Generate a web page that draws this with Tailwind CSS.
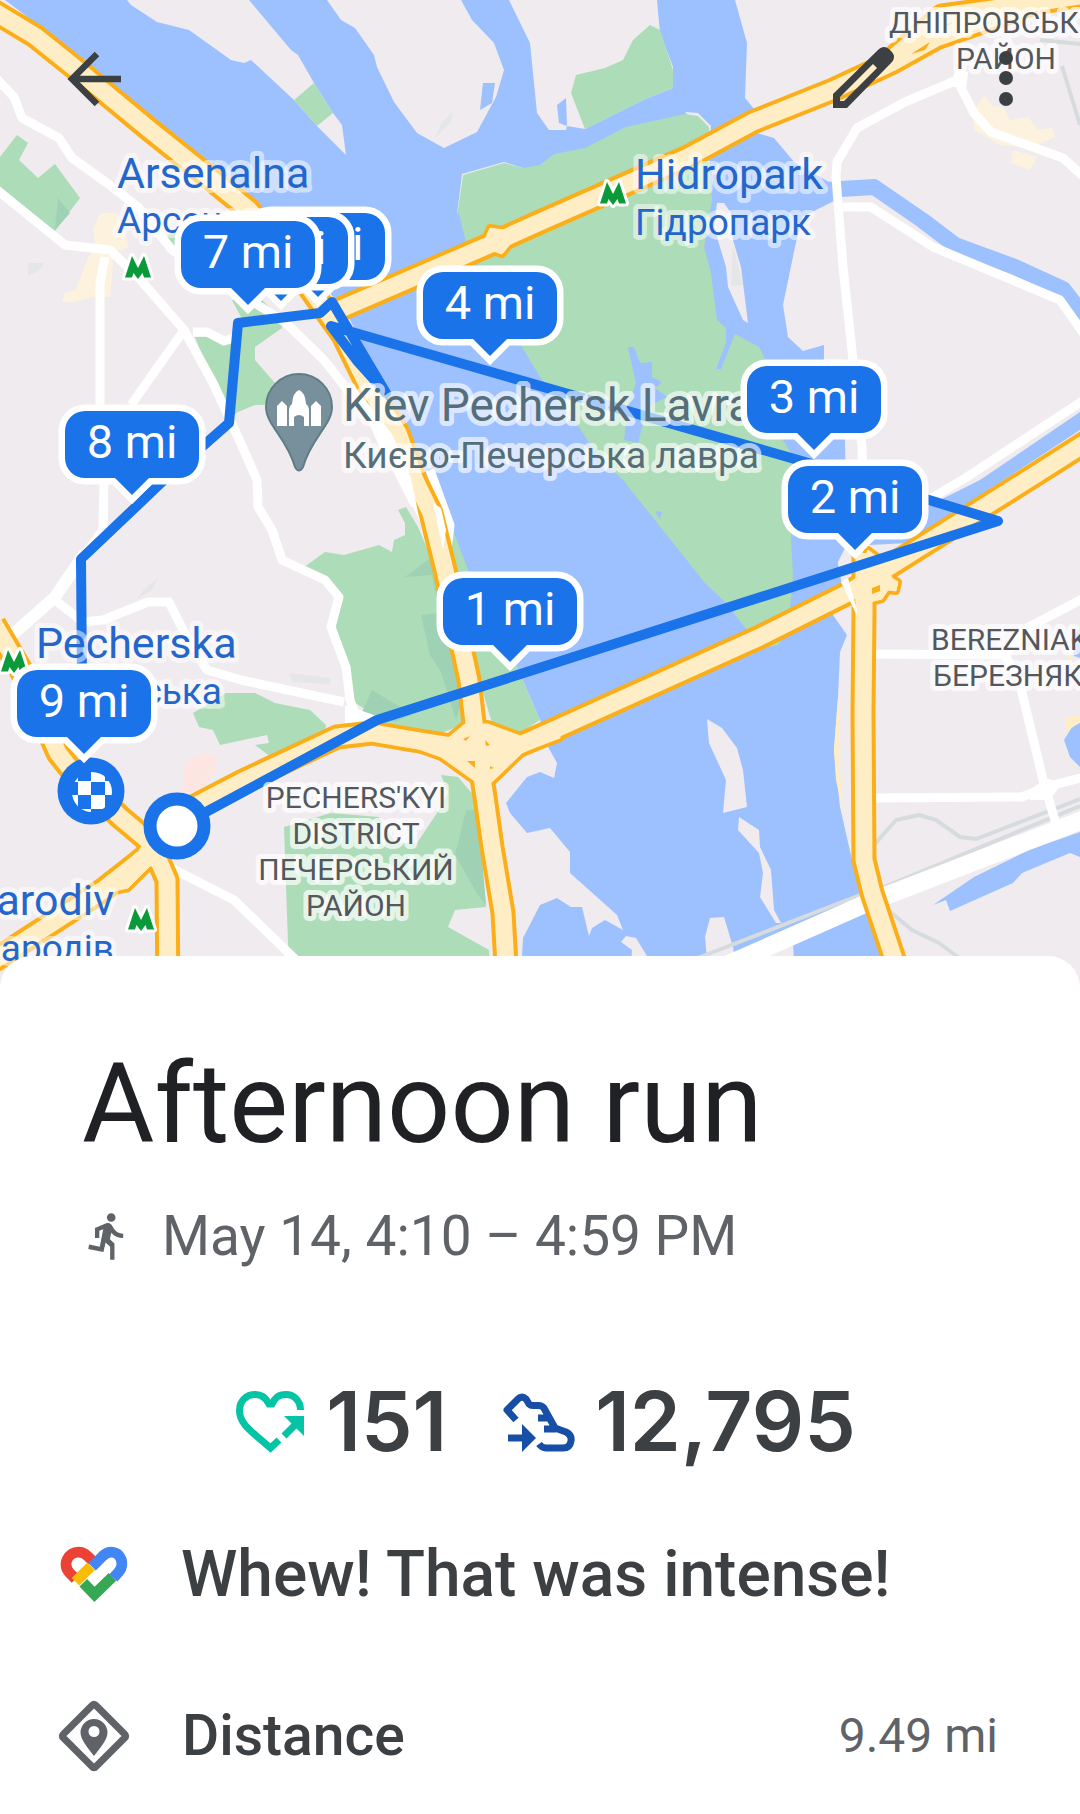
<!DOCTYPE html>
<html lang="en">
<head>
<meta charset="utf-8">
<meta name="viewport" content="width=device-width, initial-scale=1">
<title>Afternoon run</title>
<script src="https://cdn.jsdelivr.net/npm/@tailwindcss/browser@4"></script>
</head>
<body class="bg-white font-['Roboto',sans-serif] text-[#3c4043] overflow-x-hidden">
<header class="relative">
<svg class="block w-full h-auto" viewBox="0 0 1080 996" role="img" aria-label="Map of the run">
<defs>
<g id="bubble">
<path d="M20 0H114A20 20 0 0 1 134 20V47A20 20 0 0 1 114 67H84L67 84L50 67H20A20 20 0 0 1 0 47V20A20 20 0 0 1 20 0Z" fill="#1a73e8" stroke="#fff" stroke-width="13" paint-order="stroke"/>
</g>
<path id="metro" d="M-13 10.500L-6 -11L0 1L6 -11L13 10.500H6L4.500 6L0 12L-4.500 6L-6 10.500Z" fill="#0b9a3a" stroke="#fff" stroke-width="6" paint-order="stroke" stroke-linejoin="round"/>
<g id="highways" fill="none" stroke-linejoin="round">
<path d="M-10 9L35 36L80 72L150 130L200 170L248 209L290 260L318 300L343 335L370 390L398 433L415 480L431 513L445 570L469 680L476 740L485 797L492 847L503 913L508 1000"/>
<path d="M336 311L489 245L540 222L688 157L753 122L833 90L891 63L936 38L988 20L1080 -14"/>
<path d="M884 66L942 16L1000 8L1080 -4"/>
<path d="M-10 963L103 890L145 857L160 830L193 807L241 782L337 737L372 733L413 740L476 750L520 745L547 733L760 637L850 592L884 570L1027 480L1090 440"/>
<path d="M-6 624L21 670L58 753L69 767L120 817L151 843L167 880L168 1000"/>
<path d="M864 553L864 613L863 713L864 860L872 893L893 956L907 1000"/>
</g>
<path id="junctions" d="M389 728L413 738L448 738L465 724L488 724L523 737L560 722V738L523 752L492 782H476L441 757L396 741ZM485 240L490 228L510 231L511 243L502 254L490 250ZM104 885L107 876L118 872L136 853L150 848L166 865L150 866L128 888L110 892ZM868 550L884 562L892 578L898 582L896 591L888 590L882 599L870 602H856V590L858 575Z"/>
</defs>
<rect width="1080" height="996" fill="#f0ebef"/>
<!-- river -->
<path fill="#9dc1ff" d="M5 0H735L747 43L745 98L755 110L757 133L774 138L795 163L829 182L836 200L802 217L795 247L783 305L788 337L803 351L824 345V370L845 440L846 490L930 505L980 480L1080 412V430L908 543L870 545L845 550L838 562L842 585L833 615L847 635L840 652L838 697L834 750L840 807L855 873L863 900L907 1000H522V956L523 938L540 905L557 898L571 907H582L589 936L592 928L605 920L623 930L617 915L570 873V852L550 828L527 833L510 813L506 803L527 777L540 772L554 778L557 763L547 745L540 720L517 667L475 600L448 517L430 490L390 400L345 310L260 215L200 165L100 85L42 28Z"/>
<path fill="none" stroke="#9dc1ff" stroke-width="16" stroke-linejoin="round" d="M825 190L874 187L922 220L955 245L1015 267L1063 289L1084 316"/>
<path fill="#9dc1ff" d="M933 905L974 877L1029 850L1080 832V857L1070 853L1022 873L1013 883L950 911L946 900ZM1080 723L1072 727L1064 740L1070 757L1080 767ZM1080 628L1070 640L1074 656L1080 658Z"/>
<!-- islands -->
<g fill="#f0ebef">
<path d="M127 0L131 5L157 22L189 30L231 60L244 63L251 60L294 100L317 126L346 155L342 125L333 113L314 83L298 55L291 50L249 0Z"/>
<path d="M327 0L341 20L355 28L374 55L377 67L394 102L417 133L444 148L477 132L496 97L504 70L494 43L472 20L461 0Z"/>
<path d="M509 0L530 43L537 113L549 130H566L567 126L585 129L643 100L673 88V67L660 33L657 0Z"/>
<path d="M707 719L722 728L737 748L743 770L747 807L723 813L726 780L709 743ZM739 817L759 830L760 847L771 870L774 910L781 923H776L760 897L763 873L759 853L738 830ZM710 918L724 917L733 947L735 960H707L705 937ZM626 936L636 938L647 956V965H631L632 950L621 942ZM760 960L793 944L794 960Z"/>
<path d="M462 174L504 162L523 168L463 190L457 215ZM685 112L698 113L711 126L710 138Z"/>
<path d="M838 562L845 548L866 550V600L842 585Z"/>
</g>
<path fill="#9dc1ff" d="M483 83H495L492 103L480 110ZM566 98L557 105L559 123L567 126Z"/>
<path fill="#ffeec5" d="M838 697L840 720V770L843 812L836 780L834 750ZM1066 655L1072 650V662ZM1065 718L1080 715V722L1066 732Z"/>
<!-- parks -->
<g fill="#addcb8">
<path d="M585 129L571 93L576 75L605 68L623 60L633 40L650 25L660 30L673 70V88L643 100Z"/>
<path d="M294 100L314 83L333 113L317 126Z"/>
<path d="M463 175L504 163L523 168L540 165L554 154L585 148L626 127L685 114L698 116L709 127L710 137V170L712 200L704 247L711 273L717 320L726 328V343L716 369H721L735 334L759 347L768 365L781 437L795 460L791 537L793 577L788 630L778 645L764 648L747 630L726 603L705 583L623 480L600 460L581 430L540 377L522 347L479 267L466 242L458 210Z"/>
<path d="M17 135L28 143L19 160L38 178L55 164L80 198L55 231L0 193V157Z"/>
<path d="M232 300H262L282 320V328L255 347V360L275 383L265 405H255L238 412L227 420L195 337H234L241 317ZM164 237L180 230V250Z"/>
<path d="M398 510L406 507L418 527L429 553L439 613L465 722L461 725L437 735L413 733L389 725L351 700L344 663L327 627L339 597L325 580L303 568L325 552L344 555L379 545L392 552L394 540L405 535V523Z"/>
<path d="M448 517L468 570L490 630L517 667L540 720L520 733L492 723L440 547Z"/>
<path d="M226 693H255L275 703L310 710L326 725L324 737L275 760L255 745L269 743L267 735L220 745L213 730L199 727L193 713Z"/>
<path d="M441 775L458 777L475 797L486 907L455 910L448 927L489 950L491 1000H290L288 943L284 827L331 813L379 817L396 843H417L437 813L448 793Z"/>
</g>
<path fill="#9fd2b5" d="M441 550L405 577L432 575L439 613L421 615L430 655L441 672L456 720L465 690L440 570ZM372 690L362 712L395 722L412 714ZM466 810L455 855L478 895L486 905L478 810ZM58 198L70 213L55 230Z"/>
<path fill="#9dc1ff" d="M628 347H634L640 363L652 362V377L662 382L655 388L667 397L647 407L638 443L624 440L628 407L636 383ZM655 511L662 512L660 519Z"/>
<path fill="#f0ebef" d="M717 203H724L731 213L733 240L741 267L748 323L743 320L728 287L726 267L714 227Z"/>
<path fill="#e4e6e7" d="M453 112L451 122L435 138L442 122ZM28 263L44 263L40 270L28 276ZM733 245L743 285L731 286ZM158 578L152 590L137 599L145 588ZM289 673L330 678V684L292 682Z"/>
<path fill="#fdf2dd" d="M93 230L100 213H117L129 247L114 253L110 297H93L74 302H62L65 293L76 290L88 258L96 248ZM972 113L984 95L992 106L1003 107L1010 120L1028 117L1038 130L1052 128L1055 137L1030 148L1000 145L975 130ZM1013 150L1037 157L1030 170L1011 163Z"/>
<path fill="#fde6e2" d="M185 763L205 752L217 757L216 772L205 782L203 792H182Z"/>
<!-- rail and minor roads -->
<g fill="none" stroke="#d6dbde" stroke-width="4" stroke-linejoin="round">
<path d="M690 961L860 895L884 887L1080 806M874 845L896 820L919 815L936 820L960 837L976 839L1080 799M888 910L912 930L939 943L962 960M1062 66L1080 125M1040 40L1080 44"/>
</g>
<g fill="none" stroke="#fff" stroke-width="9" stroke-linejoin="round">
<path d="M-4 78L14 97L22 118L59 138L72 158L107 183L138 207L172 250L286 323L324 360L375 425L415 505"/>
<path d="M-4 189L65 245L110 250L138 277L184 330L213 383L238 437L257 480L258 507L272 530L282 560L325 580L339 597L331 627L346 667L350 700L358 722"/>
<path d="M105 257L100 283V407L104 480L103 530L83 557"/>
<path stroke-width="12" d="M85 553L55 597L10 637"/>
<path d="M184 330L131 405M193 332H207L224 341L238 337M55 600L83 622L103 620L148 602H169L183 630L207 670L241 680L344 702M169 867L234 900L296 960"/>
<path d="M957 80L905 102L857 128L837 162L836 177L843 267L853 360L862 447L864 550M957 80L974 113L991 132L1063 158L1084 177M843 207H871L933 247L1060 300L1084 334"/>
<path d="M1084 400L967 477L925 502M872 654L1005 655L1019 680L1043 780L1057 827M871 798L1022 797L1046 787L1084 777M1005 655L1029 627L1084 598M430 470L450 525L447 550"/>
<path stroke-width="18" d="M680 985L747 956L867 903L1090 817"/>
</g>
<path fill="#fff" d="M345 705L377 716L370 735L345 738ZM1030 790L1046 778L1062 783L1050 800H1030ZM956 68L968 72L966 90L950 86Z"/>
<!-- highways: casing, then surface -->
<use href="#highways" stroke="#fbae17" stroke-width="25"/>
<use href="#junctions" fill="#fbae17" stroke="#fbae17" stroke-width="8" stroke-linejoin="round"/>
<use href="#highways" stroke="#ffeec5" stroke-width="17"/>
<use href="#junctions" fill="#ffeec5" stroke="#ffeec5" stroke-width="1"/>
<path fill="#fbae17" d="M463 739L470 736L466 741ZM485 740L490 745L486 746ZM467 761H475V768ZM872 588L880 585V591L872 594ZM911 54L930 42L925 50ZM490 766L494 768L490 769Z"/>
<path fill="#fff" d="M352 383L362 396L392 434L411 478L420 522L404 488L378 444ZM433 503L441 508L446 530L443 550ZM841 582L848 578L857 610V616Z"/>
<!-- route -->
<path fill="none" stroke="#1a73e8" stroke-width="10" stroke-linejoin="round" stroke-linecap="round" d="M178 827L377 720L998 521L929 500L812 464L331 326L358 362L386 393L332 302L320 313L238 323L229 423L162 482L81 559L82 680"/>
<path fill="#1a73e8" d="M350 350L364 352L391 405L383 396Z"/>
<!-- place names -->
<g paint-order="stroke" stroke="#fff" stroke-opacity=".5" stroke-width="10" stroke-linejoin="round">
<g fill="#2467cc" font-size="43">
<text x="117" y="188">Arsenalna</text>
<text x="635" y="189">Hidropark</text>
<text x="36" y="658">Pecherska</text>
<text x="114" y="915" text-anchor="end">arodiv</text>
<g font-size="37">
<text x="117" y="233">Арсенальна</text>
<text x="635" y="235">Гідропарк</text>
<text x="222" y="704" text-anchor="end">Печерська</text>
<text x="114" y="961" text-anchor="end">ародів</text>
</g>
</g>
<g fill="#546e7a" stroke-opacity=".65">
<text x="343" y="421" font-size="46">Kiev Pechersk Lavra</text>
<text x="343" y="468" font-size="37">Києво-Печерська лавра</text>
</g>
<g fill="#54585d" font-size="30" stroke-opacity=".7">
<text x="356" y="808" text-anchor="middle">PECHERS'KYI</text>
<text x="356" y="844" text-anchor="middle">DISTRICT</text>
<text x="356" y="880" text-anchor="middle">ПЕЧЕРСЬКИЙ</text>
<text x="356" y="916" text-anchor="middle">РАЙОН</text>
<text x="931" y="650">BEREZNIAK</text>
<text x="933" y="686">БЕРЕЗНЯК</text>
<text x="889" y="33">ДНІПРОВСЬК</text>
<text x="956" y="69">РАЙОН</text>
</g>
</g>
<use href="#metro" x="138" y="267"/>
<use href="#metro" x="613" y="193"/>
<use href="#metro" x="14" y="661"/>
<use href="#metro" x="141" y="919"/>
<!-- landmark pin -->
<path d="M299 374A33 33 0 0 1 332 407C332 425 311 438 303 467Q299 474 295 467C287 438 266 425 266 407A33 33 0 0 1 299 374Z" fill="#78909c" stroke="#607d87" stroke-width="2"/>
<path fill="#fff" d="M277 426V406L282 401L287 406V426ZM289 426V411Q289 406 292 404Q293 392 299 390Q305 392 306 404Q309 406 309 411V426H304V417Q299 413 294 417V426ZM311 426V406L316 401L321 406V426Z"/>
<!-- start and finish -->
<circle cx="91" cy="791" r="33.500" fill="#1a73e8"/>
<clipPath id="flag"><circle cx="92" cy="792" r="20"/></clipPath>
<g clip-path="url(#flag)" fill="#fff"><path d="M72 772H78V782H72ZM91 771H105V782H91ZM78 781H91V795H78ZM105 781H113V795H105ZM91 795H105V809H91ZM70 795H78V809H70ZM78 809H91V813H78Z"/></g>
<circle cx="177" cy="826" r="27" fill="#fff" stroke="#1a73e8" stroke-width="13"/>
<!-- mile markers -->
<g fill="#fff" font-size="47" text-anchor="middle">
<use href="#bubble" x="251" y="213"/><text x="318" y="260">5 mi</text>
<use href="#bubble" x="214" y="217"/><text x="281" y="264">6 mi</text>
<use href="#bubble" x="181" y="221"/><text x="248" y="268">7 mi</text>
<use href="#bubble" x="423" y="272"/><text x="490" y="319">4 mi</text>
<use href="#bubble" x="747" y="366"/><text x="814" y="413">3 mi</text>
<use href="#bubble" x="788" y="466"/><text x="855" y="513">2 mi</text>
<use href="#bubble" x="443" y="578"/><text x="510" y="625">1 mi</text>
<use href="#bubble" x="65" y="411"/><text x="132" y="458">8 mi</text>
<use href="#bubble" x="17" y="670"/><text x="84" y="717">9 mi</text>
</g>
</svg>
<nav class="absolute inset-x-0 top-8 flex items-center px-12 text-[#3c4043]" aria-label="Activity actions">
<button type="button" aria-label="Back" class="size-24"><svg class="size-full" viewBox="0 0 96 96" fill="none" stroke="currentColor" stroke-width="6.500"><path d="M73 47H24M49 22L24 47L49 72"/></svg></button>
<button type="button" aria-label="Edit" class="ml-auto mr-11 size-24"><svg class="size-full" viewBox="0 0 96 96"><path fill="currentColor" fill-rule="evenodd" d="M17 76V62L63 17Q68 13 73 17L76 20Q80 25 76 30L31 76ZM24 69H28L61 36L57 32L24 65Z"/></svg></button>
<button type="button" aria-label="More options" class="-mr-5 size-24"><svg class="size-full" viewBox="0 0 96 96" fill="currentColor"><circle cx="50" cy="26" r="7"/><circle cx="50" cy="46" r="7"/><circle cx="50" cy="67" r="7"/></svg></button>
</nav>
</header>
<main class="relative -mt-10 rounded-t-[32px] bg-white pt-[88px] pb-2">
<section class="px-[82px]">
<h1 class="text-[111px] leading-[120px] text-[#202124]">Afternoon run</h1>
<p class="mt-10 flex items-center gap-7 text-[55px] leading-[64px] text-[#5f6368]">
<svg class="size-[52px] shrink-0" viewBox="0 0 24 24" fill="currentColor" aria-label="Run"><path d="M13.490 5.480c1.100 0 2-.9 2-2s-.9-2-2-2-2 .9-2 2 .9 2 2 2zm-3.600 13.900l1-4.400 2.100 2v6h2v-7.500l-2.100-2 .6-3c1.300 1.500 3.300 2.500 5.500 2.500v-2c-1.900 0-3.500-1-4.300-2.400l-1-1.600c-.4-.6-1-1-1.700-1-.3 0-.5.100-.8.100l-5.200 2.200v4.700h2v-3.400l1.800-.7-1.600 8.100-4.900-1-.4 2 7 1.400z"/></svg>
<span>May 14, 4:10 – 4:59 PM</span></p>
</section>
<section class="mt-[102px] flex items-center justify-center gap-14 pl-3 font-['Inter',sans-serif] text-[82px] leading-[104px] font-semibold" aria-label="Summary">
<div class="flex items-center gap-5">
<svg class="h-[62px] w-[70px]" viewBox="0 0 70 62" fill="none" stroke="#04c4a5" stroke-width="7" aria-label="Heart Points"><path d="M64.500 19C64.500 10 58 3.500 50 3.500C42 3.500 39 7 36 13H33C30 7 26 3.500 19.500 3.500C10 3.500 3.500 10 3.500 19.500C3.500 33 15 40 34.500 57L43 49"/><path d="M48 45L61 32"/><path fill="#04c4a5" stroke="none" d="M48 25H68V45Z"/></svg>
<span>151</span></div>
<div class="flex items-center gap-5">
<svg class="h-[62px] w-[72px]" viewBox="0 0 72 62" fill="none" stroke="#174ea6" stroke-width="7" stroke-linejoin="round" aria-label="Steps"><path d="M13 29L4 19L15 8Q19 4 23 8L26 13Q28 15 31 14.500H36Q40 14.500 42 19L52 37L63 41Q69 44 68 50Q67 57 60 57H43Q39 57 36 53M35 27H46M41 38H53"/><path d="M5 47H21"/><path fill="#174ea6" stroke="none" d="M19 33L33 47L19 61Z"/></svg>
<span>12,795</span></div>
</section>
<section class="mt-[65px] flex items-center gap-[52px] px-[59px]">
<svg class="h-[62px] w-[70px] shrink-0" viewBox="0 0 72 62" fill="none" stroke-width="11" aria-hidden="true"><path stroke="#ea4335" d="M17 35L11 29C3 20 9 7.500 20 7.500C25 7.500 27 9 34 16"/><path stroke="#34a853" d="M25 39L36.500 51L55 33"/><path stroke="#fbbc04" d="M17 38L33 22"/><path stroke="#4285f4" d="M34 22.500L45 11.500C52 5 60 7 63 13C66 18 65 25 60 29.500L56 34"/></svg>
<h2 class="text-[64px] leading-[72px] font-medium">Whew! That was intense!</h2>
</section>
<section class="mt-[89px] flex items-center gap-[52px] px-[58px]">
<svg class="size-[72px] shrink-0 text-[#5f6368]" viewBox="0 0 72 72" aria-hidden="true"><path fill="none" stroke="currentColor" stroke-width="7" stroke-linejoin="round" d="M34 5.500Q36 3 38 5.500L66.500 34Q69 36 66.500 38L38 66.500Q36 69 34 66.500L5.500 38Q3 36 5.500 34Z"/><path fill="currentColor" fill-rule="evenodd" d="M36 19A13.500 13.500 0 0 1 49.500 32.500C49.500 40 42 48 36 56C30 48 22.500 40 22.500 32.500A13.500 13.500 0 0 1 36 19ZM36 26A5.500 5.500 0 1 0 36 37A5.500 5.500 0 1 0 36 26Z"/></svg>
<h3 class="text-[57px] leading-[72px] font-medium">Distance</h3>
<span class="ml-auto pr-6 text-[48px] leading-[72px] text-[#5f6368]">9.49 mi</span>
</section>
</main>
</body>
</html>
